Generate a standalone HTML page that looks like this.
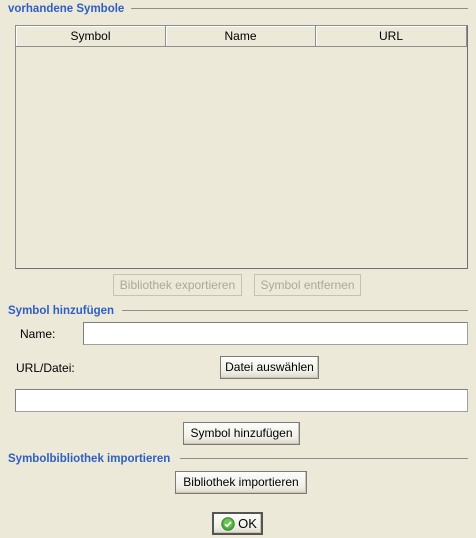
<!DOCTYPE html>
<html><head><meta charset="utf-8"><style>
*{box-sizing:border-box;margin:0;padding:0}
body{width:476px;height:538px;background:#ECE9D8;font-family:Tahoma,"Liberation Sans","DejaVu Sans",sans-serif;font-size:12px;color:#000;position:relative;overflow:hidden}
.a{position:absolute}
.t{position:absolute;color:#2E5FC4;font-weight:bold;font-size:11.5px;line-height:14px}
.ln{position:absolute;height:2px;border-top:1px solid #8e8e8e}
.btn{position:absolute;border:1px solid #7a7a7a;background:linear-gradient(#fdfdfb,#f0efe6 70%,#dcd8c8);text-align:center;line-height:21px;font-size:12px;box-shadow:inset -1px -1px 0 #c9c5b4;white-space:nowrap}
.dis{position:absolute;border:1px solid #c7c3b2;color:#aca899;text-align:center;line-height:20px;font-size:12px;white-space:nowrap}
.in{position:absolute;background:#fff;border:1px solid #7f7f7f;border-right-color:#a0a0a0;border-bottom-color:#a0a0a0}
.h{position:absolute;top:0;height:21px;line-height:21px;text-align:center;border-right:1px solid #8e8e8e;border-bottom:1px solid #8e8e8e;box-shadow:inset 1px 1px 0 #fff}
</style></head><body>
<div class="t" style="left:8px;top:2px">vorhandene Symbole</div>
<div class="ln" style="left:131px;top:8px;width:337px"></div>
<div class="a" style="left:15px;top:25px;width:453px;height:244px;border:1px solid #8e8e8e;border-right-color:#6f6f6f;border-bottom-color:#6f6f6f">
 <div class="h" style="left:0;width:150px">Symbol</div>
 <div class="h" style="left:150px;width:150px">Name</div>
 <div class="h" style="left:300px;width:151px">URL</div>
</div>
<div class="dis" style="left:113px;top:274px;width:129px;height:22px">Bibliothek exportieren</div>
<div class="dis" style="left:254px;top:274px;width:107px;height:22px">Symbol entfernen</div>
<div class="t" style="left:8px;top:304px">Symbol hinzufügen</div>
<div class="ln" style="left:122px;top:310px;width:346px"></div>
<div class="a" style="left:20px;top:327px">Name:</div>
<div class="in" style="left:83px;top:322px;width:385px;height:23px"></div>
<div class="a" style="left:16px;top:361px">URL/Datei:</div>
<div class="btn" style="left:220px;top:356px;width:99px;height:23px">Datei auswählen</div>
<div class="in" style="left:15px;top:389px;width:453px;height:23px"></div>
<div class="btn" style="left:183px;top:422px;width:117px;height:23px">Symbol hinzufügen</div>
<div class="t" style="left:8px;top:452px">Symbolbibliothek importieren</div>
<div class="ln" style="left:180px;top:458px;width:288px"></div>
<div class="btn" style="left:175px;top:471px;width:132px;height:23px">Bibliothek importieren</div>
<div class="btn" style="left:212px;top:512px;width:51px;height:23px;border:2px solid #555;line-height:20px;padding-left:20px;font-size:13px">OK
 <svg class="a" style="left:7px;top:3px" width="14" height="14" viewBox="0 0 14 14"><circle cx="7" cy="7" r="6.3" fill="#4caf3a" stroke="#2f7d22" stroke-width="0.8"/><circle cx="7" cy="6" r="4.5" fill="#7ed36a" opacity=".6"/><path d="M4 7.2l2 2 4-4.2" fill="none" stroke="#fff" stroke-width="1.8"/></svg>
</div>
</body></html>
